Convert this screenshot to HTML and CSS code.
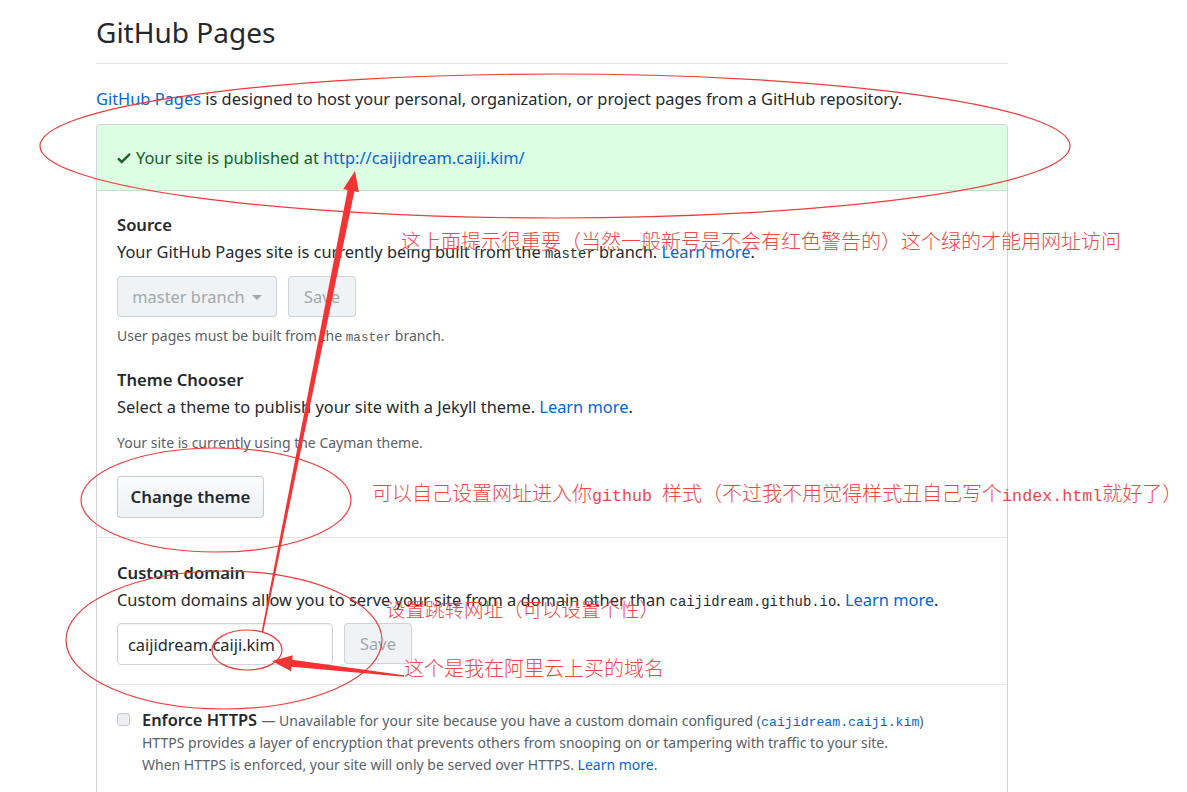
FILE: index.html
```html
<!DOCTYPE html>
<html lang="zh-CN">
<head>
<meta charset="utf-8">
<title>GitHub Pages</title>
<link rel="stylesheet" href="styles.css">
</head>
<body>
<div class="page">
  <div class="subhead">
    <h2 class="subhead-heading">GitHub Pages</h2>
  </div>
  <p class="intro"><a href="#">GitHub Pages</a> is designed to host your personal, organization, or project pages from a GitHub repository.</p>

  <div class="box">
    <div class="flash-success">
      <svg class="check" viewBox="0 0 12 16" width="14" height="18" aria-hidden="true"><path d="M12 5l-8 8-4-4 1.5-1.5L4 10l6.5-6.5L12 5z"/></svg>
      <span>Your site is published at <a href="#">http://caijidream.caiji.kim/</a></span>
    </div>

    <div class="box-row">
      <h3 class="section-title">Source</h3>
      <p class="desc">Your GitHub Pages site is currently being built from the <code>master</code> branch. <a href="#">Learn more</a>.</p>
      <div class="btn-row">
        <button class="btn btn-disabled btn-branch">master branch<span class="caret"></span></button>
        <button class="btn btn-disabled btn-save">Save</button>
      </div>
      <p class="note note-source">User pages must be built from the <code>master</code> branch.</p>

      <h3 class="section-title section-theme">Theme Chooser</h3>
      <p class="desc">Select a theme to publish your site with a Jekyll theme. <a href="#">Learn more</a>.</p>
      <p class="note note-theme">Your site is currently using the Cayman theme.</p>
      <button class="btn btn-theme">Change theme</button>
    </div>

    <div class="box-row box-row-domain">
      <h3 class="section-title">Custom domain</h3>
      <p class="desc">Custom domains allow you to serve your site from a domain other than <code class="code-domain">caijidream.github.io</code>. <a href="#">Learn more</a>.</p>
      <div class="btn-row btn-row-domain">
        <input class="form-control" type="text" value="caijidream.caiji.kim">
        <button class="btn btn-disabled btn-save">Save</button>
      </div>
    </div>

    <div class="box-row box-row-https">
      <span class="checkbox"></span>
      <div class="https-text">
        <div class="https-label"><strong>Enforce HTTPS</strong> <span class="https-muted">— Unavailable for your site because you have a custom domain configured (<code class="code-link">caijidream.caiji.kim</code>)</span></div>
        <p class="https-note">HTTPS provides a layer of encryption that prevents others from snooping on or tampering with traffic to your site.</p>
        <p class="https-note">When HTTPS is enforced, your site will only be served over HTTPS. <a href="#">Learn more</a>.</p>
      </div>
    </div>
  </div>
</div>

<svg class="marks" viewBox="0 0 1187 792" width="1187" height="792" aria-hidden="true">
  <g fill="none" stroke="#f23a3a" stroke-width="1.2">
    <ellipse cx="555" cy="146" rx="515" ry="72"/>
    <ellipse cx="216" cy="500" rx="135" ry="52"/>
    <ellipse cx="224" cy="640" rx="158" ry="69"/>
    <ellipse cx="247" cy="650" rx="35" ry="20"/>
  </g>
  <g fill="#f53333">
    <polygon points="355,171 358.9,192.2 354.4,191.3 263.2,632.2 261.6,631.8 347.6,189.9 343.2,189"/>
    <polygon points="272,661 292.8,655.3 292.2,659.8 404.1,675.2 403.9,676.8 291.6,666.8 291,671.2"/>
  </g>
</svg>

<div class="ann ann-1">这上面提示很重要（当然一般新号是不会有红色警告的）这个绿的才能用网址访问</div>
<div class="ann ann-2">可以自己设置网址进入你<span class="ann-latin">github </span>样式（不过我不用觉得样式丑自己写个<span class="ann-latin">index.html</span>就好了）</div>
<div class="ann ann-3">设置跳转网址（可以设置个性）</div>
<div class="ann ann-4">这个是我在阿里云上买的域名</div>
</body>
</html>
```

FILE: styles.css
```css
html, body {
  margin: 0;
  padding: 0;
  background: #fff;
}
body {
  width: 1187px;
  height: 792px;
  overflow: hidden;
  position: relative;
  font-family: "Noto Sans", "Open Sans", sans-serif;
  font-size: 16.4px;
  line-height: 25px;
  color: #24292e;
}
a {
  color: #0366d6;
  text-decoration: none;
}
p { margin: 0; }
h2, h3 { margin: 0; }
code {
  font-family: "Liberation Mono", "DejaVu Sans Mono", monospace;
  font-size: 13.8px;
  line-height: 1;
}

.page {
  margin-left: 96px;
  width: 912px;
}

.subhead {
  padding-top: 15px;
  padding-bottom: 13px;
  border-bottom: 1px solid #e1e4e8;
}
.subhead-heading {
  font-size: 28px;
  font-weight: 400;
  line-height: 35px;
}

.intro {
  margin-top: 22px;
  margin-bottom: 13px;
}

.box {
  border: 1px solid #d1d5da;
  border-bottom: none;
  border-radius: 4px 4px 0 0;
}

.flash-success {
  display: flex;
  align-items: center;
  gap: 5px;
  background: #dcffe4;
  color: #165c26;
  padding: 20px 20px 20px 20px;
  height: 25px;
  border-bottom: 1px solid #c9dccd;
  border-radius: 3px 3px 0 0;
}
.check {
  fill: #1f5f2d;
  flex: none;
}

.box-row {
  padding: 21px 20px 19px 20px;
}
.box-row + .box-row {
  border-top: 1px solid #e1e4e8;
}
.box-row-domain {
  padding-top: 22px;
}

.section-title {
  font-size: 16.6px;
  font-weight: 600;
  line-height: 25px;
}
.section-theme {
  margin-top: 21px;
}
.desc {
  margin-top: 2px;
  height: 25px;
}

.btn-row {
  display: flex;
  gap: 11px;
  margin-top: 12px;
  height: 41px;
}
.btn-row-domain {
  margin-top: 11px;
  height: 42px;
}

.btn {
  box-sizing: border-box;
  height: 41px;
  padding: 0 15px;
  font-family: inherit;
  font-size: 16.4px;
  line-height: 20px;
  white-space: nowrap;
  font-weight: 600;
  color: #24292e;
  border: 1px solid rgba(27, 31, 35, 0.2);
  border-radius: 4px;
  background: linear-gradient(180deg, #fafbfc, #eff3f6 90%);
}
.btn-disabled {
  font-weight: 400;
  color: #a2a7ad;
  background: #eff3f6;
  border-color: rgba(27, 31, 35, 0.15);
}
.btn-branch {
  width: 160px;
  padding: 0;
  display: flex;
  align-items: center;
  justify-content: center;
  gap: 7px;
  flex: none;
}
.caret {
  width: 0;
  height: 0;
  border-left: 5px solid transparent;
  border-right: 5px solid transparent;
  border-top: 5px solid #a2a7ad;
  margin-top: 2px;
}
.btn-save {
  width: 68px;
  padding: 0;
  flex: none;
}
.btn-theme {
  display: block;
  margin-top: 23px;
  width: 147px;
  height: 42px;
  padding: 0;
  font-size: 16.8px;
}

.note {
  font-size: 14px;
  line-height: 21px;
  height: 21px;
  color: #586069;
}
.note code {
  font-size: 12.6px;
}
.note-source {
  margin-top: 8px;
}
.note-theme {
  margin-top: 13px;
}

.code-domain {
  font-size: 13.9px;
}

.form-control {
  box-sizing: border-box;
  width: 216px;
  height: 42px;
  padding: 0 10px;
  font-family: inherit;
  font-size: 16.4px;
  color: #24292e;
  border: 1px solid #d1d5da;
  border-radius: 4px;
  background: #fff;
  box-shadow: inset 0 1px 2px rgba(27, 31, 35, 0.075);
  outline: none;
  flex: none;
}

.box-row-https {
  display: flex;
  align-items: flex-start;
  gap: 12px;
  padding-top: 23px;
  padding-bottom: 30px;
}
.checkbox {
  flex: none;
  box-sizing: border-box;
  width: 13px;
  height: 13px;
  margin-top: 5px;
  border: 1px solid #c5c9cd;
  border-radius: 3px;
  background: #eceef0;
}
.https-label {
  line-height: 24px;
  height: 24px;
}
.https-label strong {
  font-weight: 600;
}
.https-muted {
  font-size: 14px;
  line-height: 1;
  color: #586069;
}
.code-link {
  color: #0366d6;
  font-size: 13.2px;
}
.https-note {
  font-size: 14px;
  line-height: 22px;
  color: #586069;
}

.marks {
  position: absolute;
  left: 0;
  top: 0;
  pointer-events: none;
}

.ann {
  position: absolute;
  white-space: nowrap;
  font-family: "Noto Sans CJK SC", sans-serif;
  font-weight: 300;
  color: #f24545;
  line-height: 1;
}
.ann-latin {
  font-family: "Liberation Mono", monospace;
  font-size: 16.7px;
}
.ann-1 {
  left: 401px;
  top: 231px;
  font-size: 20px;
}
.ann-2 {
  left: 372px;
  top: 483px;
  font-size: 20px;
}
.ann-3 {
  left: 386px;
  top: 599px;
  font-size: 19.5px;
}
.ann-4 {
  left: 404px;
  top: 658px;
  font-size: 20px;
}
```
